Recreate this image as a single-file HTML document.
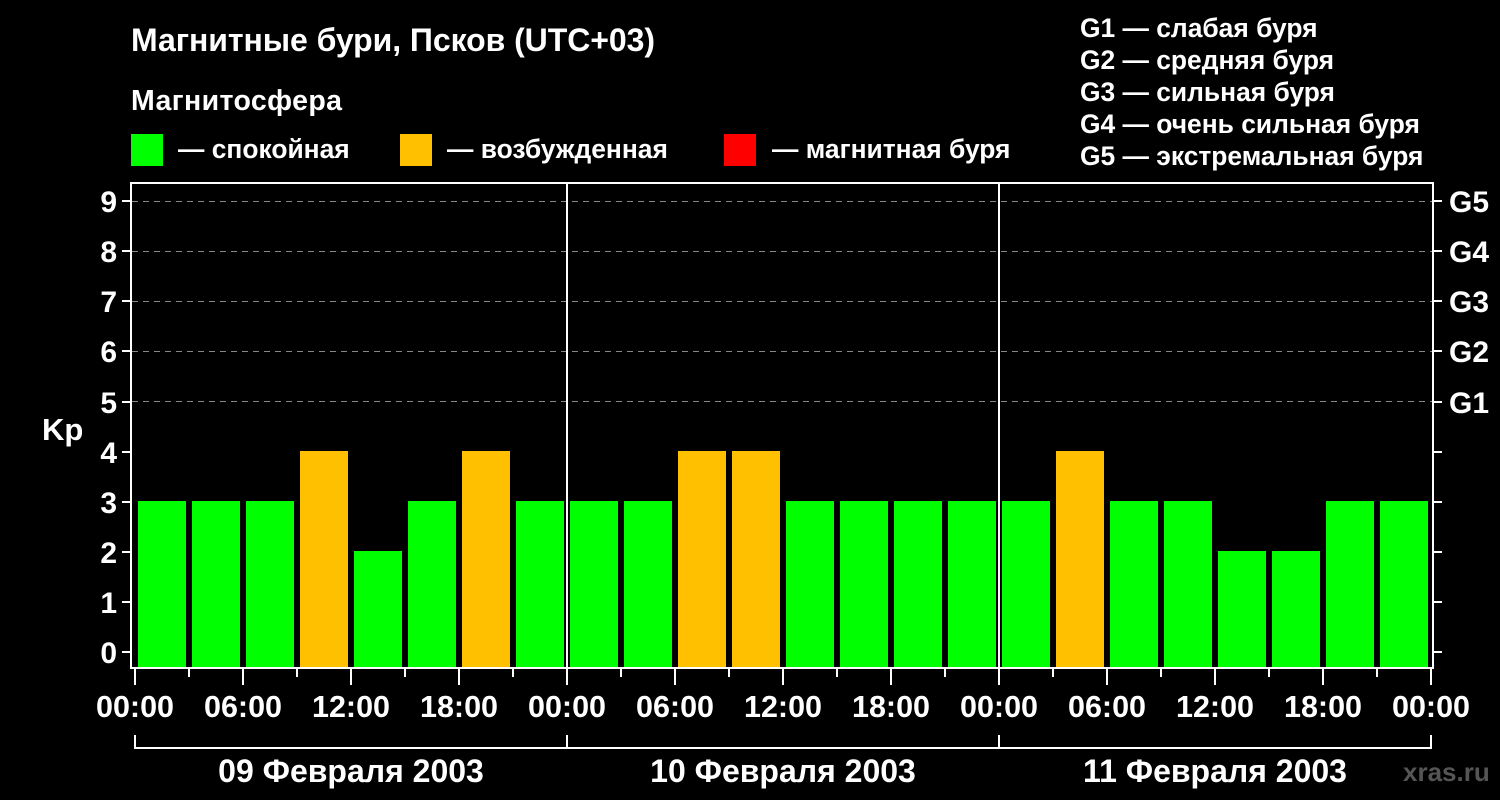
<!DOCTYPE html>
<html><head><meta charset="utf-8"><style>
html,body{margin:0;padding:0;background:#000;}
svg{display:block;font-family:"Liberation Sans",sans-serif;font-weight:bold;}
</style></head><body>
<svg width="1500" height="800" viewBox="0 0 1500 800" xmlns="http://www.w3.org/2000/svg">
<rect width="1500" height="800" fill="#000"/>
<g fill="#fff" font-size="26.4">
<text x="131" y="51" font-size="32" textLength="524">Магнитные бури, Псков (UTC+03)</text>
<text x="131" y="110" font-size="28.5" textLength="211">Магнитосфера</text>
<text x="178" y="158">— спокойная</text>
<text x="447" y="158">— возбужденная</text>
<text x="772" y="158">— магнитная буря</text>
<text x="1080" y="37">G1 — слабая буря</text>
<text x="1080" y="69">G2 — средняя буря</text>
<text x="1080" y="101">G3 — сильная буря</text>
<text x="1080" y="133">G4 — очень сильная буря</text>
<text x="1080" y="165">G5 — экстремальная буря</text>
</g>
<rect x="131" y="134" width="32" height="32" fill="#00ff00"/>
<rect x="400" y="134" width="32" height="32" fill="#ffc000"/>
<rect x="724" y="134" width="32" height="32" fill="#ff0000"/>
<g stroke="#888" stroke-width="1" stroke-dasharray="6,5">
<line x1="132" y1="201.5" x2="1432" y2="201.5"/>
<line x1="132" y1="251.5" x2="1432" y2="251.5"/>
<line x1="132" y1="301.5" x2="1432" y2="301.5"/>
<line x1="132" y1="351.5" x2="1432" y2="351.5"/>
<line x1="132" y1="401.5" x2="1432" y2="401.5"/>
</g>
<g>
<rect x="138" y="501" width="48" height="166" fill="#00ff00"/>
<rect x="192" y="501" width="48" height="166" fill="#00ff00"/>
<rect x="246" y="501" width="48" height="166" fill="#00ff00"/>
<rect x="300" y="451" width="48" height="216" fill="#ffc000"/>
<rect x="354" y="551" width="48" height="116" fill="#00ff00"/>
<rect x="408" y="501" width="48" height="166" fill="#00ff00"/>
<rect x="462" y="451" width="48" height="216" fill="#ffc000"/>
<rect x="516" y="501" width="48" height="166" fill="#00ff00"/>
<rect x="570" y="501" width="48" height="166" fill="#00ff00"/>
<rect x="624" y="501" width="48" height="166" fill="#00ff00"/>
<rect x="678" y="451" width="48" height="216" fill="#ffc000"/>
<rect x="732" y="451" width="48" height="216" fill="#ffc000"/>
<rect x="786" y="501" width="48" height="166" fill="#00ff00"/>
<rect x="840" y="501" width="48" height="166" fill="#00ff00"/>
<rect x="894" y="501" width="48" height="166" fill="#00ff00"/>
<rect x="948" y="501" width="48" height="166" fill="#00ff00"/>
<rect x="1002" y="501" width="48" height="166" fill="#00ff00"/>
<rect x="1056" y="451" width="48" height="216" fill="#ffc000"/>
<rect x="1110" y="501" width="48" height="166" fill="#00ff00"/>
<rect x="1164" y="501" width="48" height="166" fill="#00ff00"/>
<rect x="1218" y="551" width="48" height="116" fill="#00ff00"/>
<rect x="1272" y="551" width="48" height="116" fill="#00ff00"/>
<rect x="1326" y="501" width="48" height="166" fill="#00ff00"/>
<rect x="1380" y="501" width="48" height="166" fill="#00ff00"/>
</g>
<g stroke="#fff" stroke-width="2" fill="none">
<rect x="131" y="183" width="1302" height="485"/>
<line x1="567" y1="183" x2="567" y2="668"/>
<line x1="999" y1="183" x2="999" y2="668"/>
<path d="M135 735 V748 H1431 V735 M567 735 V748 M999 735 V748"/>
<path d="M122 652H131M122 602H131M122 552H131M122 502H131M122 452H131M122 402H131M122 351H131M122 301H131M122 251H131M122 201H131"/>
<path d="M1433 652H1442M1433 602H1442M1433 552H1442M1433 502H1442M1433 452H1442M1433 402H1442M1433 351H1442M1433 301H1442M1433 251H1442M1433 201H1442"/>
<path d="M135 668V685M243 668V685M351 668V685M459 668V685M567 668V685M675 668V685M783 668V685M891 668V685M999 668V685M1107 668V685M1215 668V685M1323 668V685M1431 668V685"/>
<path d="M189 668V677M297 668V677M405 668V677M513 668V677M621 668V677M729 668V677M837 668V677M945 668V677M1053 668V677M1161 668V677M1269 668V677M1377 668V677"/>
</g>
<g fill="#fff" font-size="30" text-anchor="end">
<text x="117" y="663">0</text><text x="117" y="613">1</text><text x="117" y="563">2</text>
<text x="117" y="513">3</text><text x="117" y="463">4</text><text x="117" y="413">5</text>
<text x="117" y="362">6</text><text x="117" y="312">7</text><text x="117" y="262">8</text>
<text x="117" y="212">9</text>
</g>
<text x="42" y="440" fill="#fff" font-size="31">Kp</text>
<g fill="#fff" font-size="30">
<text x="1449" y="212">G5</text><text x="1449" y="262">G4</text><text x="1449" y="312">G3</text>
<text x="1449" y="362">G2</text><text x="1449" y="413">G1</text>
</g>
<g fill="#fff" font-size="30.5" text-anchor="middle">
<text x="135" y="717">00:00</text><text x="243" y="717">06:00</text><text x="351" y="717">12:00</text><text x="459" y="717">18:00</text>
<text x="567" y="717">00:00</text><text x="675" y="717">06:00</text><text x="783" y="717">12:00</text><text x="891" y="717">18:00</text>
<text x="999" y="717">00:00</text><text x="1107" y="717">06:00</text><text x="1215" y="717">12:00</text><text x="1323" y="717">18:00</text>
<text x="1431" y="717">00:00</text>
</g>
<g fill="#fff" font-size="32" text-anchor="middle">
<text x="351" y="782">09 Февраля 2003</text>
<text x="783" y="782">10 Февраля 2003</text>
<text x="1215" y="782">11 Февраля 2003</text>
</g>
<text x="1403" y="781" fill="#555" font-size="26">xras.ru</text>
</svg>
</body></html>
